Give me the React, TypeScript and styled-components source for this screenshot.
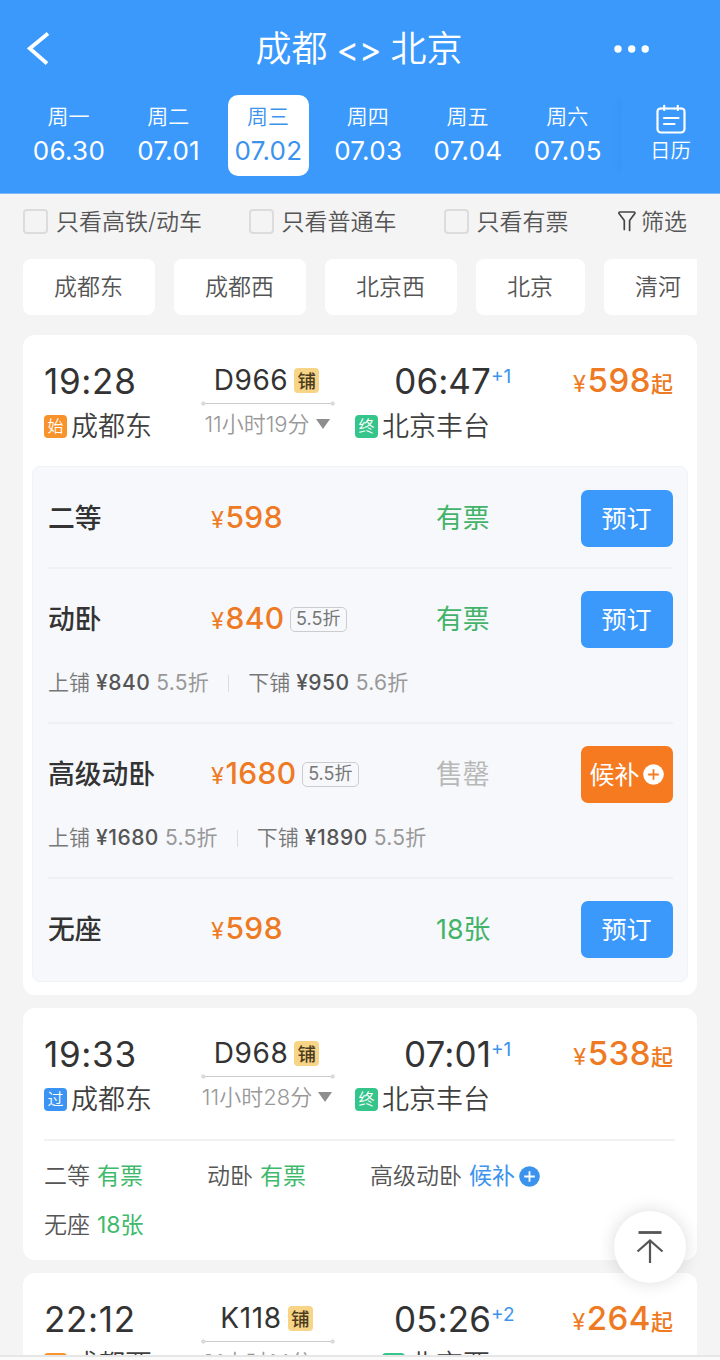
import React from "react";
import styled, { createGlobalStyle } from "styled-components";

const Global = createGlobalStyle`
  *, *::before, *::after { box-sizing: border-box; }
  body {
    margin: 0;
    background: #f4f4f4;
    font-family: Inter, "Noto Sans CJK SC", sans-serif;
    color: #333;
    -webkit-font-smoothing: antialiased;
  }
  button { font: inherit; border: 0; padding: 0; background: none; color: inherit; }
`;

const Screen = styled.div`
  position: relative;
  width: 720px;
  height: 1360px;
  overflow: hidden;
  display: flex;
  flex-direction: column;
  background: #f4f4f4;
  white-space: nowrap;
`;

const Header = styled.header`
  height: 194px;
  flex: none;
  background: #3b99fc;
  border-bottom: 1px solid #7cb9f8;
  color: #fff;
`;

const NavBar = styled.div`
  height: 94px;
  padding: 3px 70px 0 27px;
  display: flex;
  align-items: center;
  justify-content: space-between;
`;

const Title = styled.h1`
  margin: 0;
  padding: 1px 0 0 54px;
  display: flex;
  gap: 9px;
  font-size: 36px;
  line-height: 48px;
  font-weight: 350;
`;

const Arrows = styled.span`
  font-size: 34px;
  font-weight: 400;
  padding-top: 1px;
`;

const DateStrip = styled.div`
  display: flex;
  padding: 1px 0 0 19px;
`;

const Days = styled.div`
  display: flex;
  width: 602px;
`;

const Day = styled.button<{ $active?: boolean }>`
  width: 81px;
  height: 81px;
  margin: 0 9.4px;
  border-radius: 10px;
  background: ${(p) => (p.$active ? "#fff" : "transparent")};
  color: ${(p) => (p.$active ? "#3b93ee" : "#fff")};
  display: flex;
  flex-direction: column;
  align-items: center;
  padding-top: 6px;
`;

const Weekday = styled.span`
  font-size: 21px;
  line-height: 32px;
  font-weight: 350;
  margin-right: 1px;
`;

const DayDate = styled.span`
  font-size: 26px;
  line-height: 36px;
  font-weight: 400;
  letter-spacing: 0.3px;
`;

const CalendarButton = styled.button`
  width: 99px;
  height: 81px;
  padding-top: 9px;
  display: flex;
  flex-direction: column;
  align-items: center;
  font-size: 20.5px;
  line-height: 32px;
  font-weight: 350;
  box-shadow: -6px 0 6px -5px rgba(20, 90, 190, 0.13);
`;

const Filters = styled.div`
  height: 65px;
  flex: none;
  padding: 0 33px 10px 23px;
  display: flex;
  align-items: center;
  color: #555;
`;

const FilterOption = styled.label<{ $width: number }>`
  width: ${(p) => p.$width}px;
  display: flex;
  align-items: center;
  gap: 8px;
  font-size: 23px;
  line-height: 34px;
  font-weight: 350;
`;

const CheckSquare = styled.span`
  width: 25px;
  height: 25px;
  border: 2px solid #dcdcdc;
  border-radius: 4px;
`;

const FilterButton = styled.button`
  margin-left: auto;
  display: flex;
  align-items: center;
  gap: 5px;
  font-size: 23px;
  line-height: 34px;
  font-weight: 350;
`;

const Chips = styled.div`
  flex: none;
  margin: 0 23px;
  overflow: hidden;
  display: flex;
  gap: 19px;
`;

const Chip = styled.button`
  flex: none;
  height: 56px;
  padding: 0 32px 0 31px;
  border-radius: 8px;
  background: #fff;
  color: #555;
  font-size: 23px;
  font-weight: 350;
  line-height: 56px;
`;

const TrainList = styled.main`
  flex: none;
  margin: 20px 23px 0;
  display: flex;
  flex-direction: column;
  gap: 13px;
`;

const Card = styled.article<{ $height: number }>`
  height: ${(p) => p.$height}px;
  border-radius: 12px;
  background: #fff;
`;

const Summary = styled.div`
  height: 131px;
  padding: 24px 24px 0 21px;
  display: grid;
  grid-template-columns: 157px 134px 156px 1fr;
`;

const Time = styled.div`
  position: relative;
  font-size: 35px;
  line-height: 44px;
  height: 45px;
  font-weight: 400;
  letter-spacing: 0.7px;
`;

const PlusDays = styled.sup`
  position: absolute;
  left: 100%;
  top: 8px;
  font-size: 19px;
  line-height: 20px;
  color: #3b93ee;
  font-weight: 400;
  letter-spacing: 0;
`;

const Station = styled.div`
  height: 46px;
  display: flex;
  align-items: center;
  gap: 4px;
  font-size: 27px;
  line-height: 46px;
  font-weight: 350;
  color: #3f3f3f;
`;

const EndPoint = styled.div<{ $end?: boolean }>`
  display: flex;
  flex-direction: column;
  align-items: ${(p) => (p.$end ? "flex-end" : "flex-start")};
  ${Time} { letter-spacing: ${(p) => (p.$end ? "0.1px" : "0.7px")}; }
  ${Station} { margin-right: ${(p) => (p.$end ? "1px" : "0")}; }
`;

const tagColors = { 始: "#f8922b", 过: "#3b93f3", 终: "#35c48a" };
type Tag = keyof typeof tagColors;

const StationTag = styled.span<{ $tag: Tag }>`
  width: 23px;
  height: 23px;
  margin-bottom: 2px;
  border-radius: 4px;
  background: ${(p) => tagColors[p.$tag]};
  color: #fff;
  font-size: 16px;
  line-height: 22px;
  text-align: center;
`;

const Middle = styled.div`
  display: flex;
  flex-direction: column;
  align-items: center;
`;

const TrainNo = styled.div`
  height: 42px;
  display: flex;
  align-items: center;
  gap: 6px;
  font-size: 28px;
  line-height: 43px;
  font-weight: 400;
  letter-spacing: 0.6px;
  padding-right: 3px;
`;

const BunkTag = styled.span`
  width: 25px;
  height: 25px;
  border-radius: 4px;
  background: #f8d487;
  color: #4b3d1e;
  font-size: 18.5px;
  line-height: 27px;
  text-align: center;
  font-weight: 500;
  letter-spacing: 0;
`;

const Duration = styled.div`
  height: 36px;
  display: flex;
  align-items: center;
  gap: 6px;
  font-size: 22px;
  line-height: 36px;
  color: #999;
  font-weight: 350;
  padding-right: 2px;
`;

const Caret = styled.span`
  border: 7px solid transparent;
  border-top: 10px solid #8e8e8e;
  border-bottom: 0;
`;

const FromPrice = styled.div`
  display: flex;
  align-items: baseline;
  justify-content: flex-end;
  height: 44px;
  line-height: 44px;
  font-weight: 500;
  color: #ee7a23;
  font-size: 33px;
  letter-spacing: 0.5px;
  margin: -1px -1px 0 0;
`;

const Yen = styled.span`
  font-size: 23.5px;
  font-weight: 400;
  letter-spacing: 0;
  margin-right: 1.5px;
`;

const FromSuffix = styled.span`
  font-size: 22px;
  letter-spacing: 0;
  margin-right: 1px;
`;

const Panel = styled.div`
  margin: 0 9px;
  height: 516px;
  padding: 0 14.5px 0 15px;
  border-radius: 8px;
  background: #f6f8fb;
  border: 1px solid #f1f3f7;
`;

const Seat = styled.section<{ $height: number }>`
  height: ${(p) => p.$height}px;
  padding-top: 22px;
  border-bottom: 2px solid #f0eff2;
  &:first-child { padding-top: 23px; }
  &:last-child { border-bottom: 0; }
`;

const SeatRow = styled.div`
  height: 57px;
  display: grid;
  grid-template-columns: 163px 225px 1fr 92px;
  align-items: center;
  font-size: 26.8px;
  line-height: 40px;
`;

const SeatName = styled.span`
  font-weight: 500;
  margin-top: -1px;
`;

const SeatPrice = styled.span`
  display: flex;
  align-items: center;
  font-size: 30px;
  font-weight: 500;
  color: #ee7a23;
`;

const Amount = styled.span`
  display: flex;
  align-items: baseline;
  letter-spacing: 0.4px;
`;

const Discount = styled.span`
  height: 25px;
  margin-left: 5px;
  padding: 0 5.5px;
  border: 1px solid #ccc;
  border-radius: 5px;
  color: #777;
  font-size: 18px;
  line-height: 22px;
  font-weight: 400;
`;

const SeatStatus = styled.span<{ $soldOut?: boolean }>`
  color: ${(p) => (p.$soldOut ? "#b8b8b8" : "#43b369")};
  font-weight: 400;
  margin-top: -1px;
`;

const BookButton = styled.button<{ $waitlist?: boolean }>`
  width: 92px;
  height: 57px;
  border-radius: 7px;
  background: ${(p) => (p.$waitlist ? "#f57a20" : "#3b99fc")};
  color: #fff;
  font-size: 25px;
  display: flex;
  align-items: center;
  justify-content: center;
  gap: 3px;
`;

const Berths = styled.div`
  height: 70px;
  display: flex;
  align-items: center;
  font-size: 21px;
  line-height: 30px;
  color: #777;
  font-weight: 350;
`;

const Berth = styled.span`
  display: flex;
  align-items: baseline;
  gap: 6px;
  & + & {
    margin-left: 19px;
    padding-left: 20px;
    background: linear-gradient(#ddd, #ddd) left center / 1px 17px no-repeat;
  }
`;

const BerthPrice = styled.b`
  font-weight: 500;
  color: #555;
  letter-spacing: 0.5px;
`;

const BerthRate = styled.span`
  color: #999;
  font-weight: 400;
  letter-spacing: 0.3px;
`;

const SeatBrief = styled.div`
  margin: 0 22px 0 21px;
  border-top: 2px solid #f2f2f2;
  padding-top: 11px;
  display: grid;
  grid-template-columns: repeat(3, 163px);
  grid-auto-rows: 48.5px;
`;

const BriefItem = styled.div`
  display: flex;
  align-items: center;
  gap: 7px;
  height: 48px;
  font-size: 23px;
  line-height: 34px;
  font-weight: 350;
  color: #555;
`;

const BriefStatus = styled.span<{ $waitlist?: boolean }>`
  display: flex;
  align-items: center;
  gap: 4px;
  font-weight: 400;
  color: ${(p) => (p.$waitlist ? "#3b93ee" : "#3fba6c")};
`;

const ToTop = styled.button`
  position: absolute;
  left: 614px;
  top: 1211px;
  width: 72px;
  height: 72px;
  border-radius: 50%;
  background: #fff;
  box-shadow: 0 0 18px rgba(0, 0, 0, 0.14);
  display: grid;
  place-items: center;
`;

const BottomEdge = styled.footer`
  position: absolute;
  left: 0;
  right: 0;
  bottom: 0;
  height: 5px;
  border-top: 2px solid #e6e6e6;
  background: #fafafa;
`;

const PlusCircle = ({ fill, stroke }: { fill: string; stroke: string }) => (
  <svg width="21" height="21" viewBox="0 0 21 21">
    <circle cx="10.5" cy="10.5" r="10.3" fill={fill} />
    <path d="M10.5 5.2v10.6M5.2 10.5h10.6" stroke={stroke} strokeWidth="1.8" />
  </svg>
);

const RouteLine = () => (
  <svg width="134" height="5" viewBox="0 0 134 5" fill="none" stroke="#ccc">
    <path d="M4 2.5h126" />
    <circle cx="2.3" cy="2.5" r="1.6" fill="#e4e4e4" />
    <circle cx="131.7" cy="2.5" r="1.6" fill="#e4e4e4" />
  </svg>
);

const days = [
  ["周一", "06.30"],
  ["周二", "07.01"],
  ["周三", "07.02"],
  ["周四", "07.03"],
  ["周五", "07.04"],
  ["周六", "07.05"],
];

const stations = ["成都东", "成都西", "北京西", "北京", "清河"];

interface TrainInfo {
  depart: string;
  from: string;
  fromTag: Tag;
  no: string;
  duration: string;
  arrive: string;
  plus: string;
  to: string;
  toTag: Tag;
  price: string;
}

const TrainSummary = ({ t }: { t: TrainInfo }) => (
  <Summary>
    <EndPoint>
      <Time>{t.depart}</Time>
      <Station>
        <StationTag $tag={t.fromTag}>{t.fromTag}</StationTag>
        {t.from}
      </Station>
    </EndPoint>
    <Middle>
      <TrainNo>
        {t.no}
        <BunkTag>铺</BunkTag>
      </TrainNo>
      <RouteLine />
      <Duration>
        {t.duration}
        <Caret />
      </Duration>
    </Middle>
    <EndPoint $end>
      <Time>
        {t.arrive}
        <PlusDays>{t.plus}</PlusDays>
      </Time>
      <Station>
        <StationTag $tag={t.toTag}>{t.toTag}</StationTag>
        {t.to}
      </Station>
    </EndPoint>
    <FromPrice>
      <Yen>¥</Yen>
      {t.price}
      <FromSuffix>起</FromSuffix>
    </FromPrice>
  </Summary>
);

interface SeatInfo {
  name: string;
  price: string;
  discount?: string;
  status: string;
  soldOut?: boolean;
  height: number;
  berths?: [string, string, string][];
}

const seats: SeatInfo[] = [
  { name: "二等", price: "598", status: "有票", height: 102 },
  {
    name: "动卧",
    price: "840",
    discount: "5.5折",
    status: "有票",
    height: 155,
    berths: [
      ["上铺", "¥840", "5.5折"],
      ["下铺", "¥950", "5.6折"],
    ],
  },
  {
    name: "高级动卧",
    price: "1680",
    discount: "5.5折",
    status: "售罄",
    soldOut: true,
    height: 155,
    berths: [
      ["上铺", "¥1680", "5.5折"],
      ["下铺", "¥1890", "5.5折"],
    ],
  },
  { name: "无座", price: "598", status: "18张", height: 102 },
];

const SeatDetail = ({ s }: { s: SeatInfo }) => (
  <Seat $height={s.height}>
    <SeatRow>
      <SeatName>{s.name}</SeatName>
      <SeatPrice>
        <Amount>
          <Yen>¥</Yen>
          {s.price}
        </Amount>
        {s.discount && <Discount>{s.discount}</Discount>}
      </SeatPrice>
      <SeatStatus $soldOut={s.soldOut}>{s.status}</SeatStatus>
      <BookButton $waitlist={s.soldOut}>
        {s.soldOut ? "候补" : "预订"}
        {s.soldOut && <PlusCircle fill="#fff" stroke="#f57a20" />}
      </BookButton>
    </SeatRow>
    {s.berths && (
      <Berths>
        {s.berths.map(([name, price, rate]) => (
          <Berth key={name}>
            {name}
            <BerthPrice>{price}</BerthPrice>
            <BerthRate>{rate}</BerthRate>
          </Berth>
        ))}
      </Berths>
    )}
  </Seat>
);

const trains: TrainInfo[] = [
  { depart: "19:28", from: "成都东", fromTag: "始", no: "D966", duration: "11小时19分", arrive: "06:47", plus: "+1", to: "北京丰台", toTag: "终", price: "598" },
  { depart: "19:33", from: "成都东", fromTag: "过", no: "D968", duration: "11小时28分", arrive: "07:01", plus: "+1", to: "北京丰台", toTag: "终", price: "538" },
  { depart: "22:12", from: "成都西", fromTag: "始", no: "K118", duration: "31小时14分", arrive: "05:26", plus: "+2", to: "北京西", toTag: "终", price: "264" },
];

export default function App() {
  return (
    <Screen>
      <Global />
      <Header>
        <NavBar>
          <svg width="23" height="34" viewBox="0 0 23 34" fill="none" stroke="#fff" strokeWidth="3.8">
            <path d="M21 1.500L2.800 16.500L20 31.500" />
          </svg>
          <Title>
            <span>成都</span>
            <Arrows>&lt;&gt;</Arrows>
            <span>北京</span>
          </Title>
          <svg width="36" height="8" viewBox="0 0 36 8" fill="#fff">
            <circle cx="4" cy="4" r="3.7" />
            <circle cx="17.7" cy="4" r="3.7" />
            <circle cx="31.2" cy="4" r="3.7" />
          </svg>
        </NavBar>
        <DateStrip>
          <Days>
            {days.map(([w, d]) => (
              <Day key={d} $active={d === "07.02"}>
                <Weekday>{w}</Weekday>
                <DayDate>{d}</DayDate>
              </Day>
            ))}
          </Days>
          <CalendarButton>
            <svg width="30" height="31" viewBox="0 0 30 31" fill="none" stroke="#fff" strokeWidth="2.200" strokeLinecap="round">
              <path d="M5 4.5H4.5A3 3 0 0 0 1.5 7.5V25A3.500 3.500 0 0 0 5 28.500H25A3.500 3.500 0 0 0 28.500 25V7.500A3 3 0 0 0 25.500 4.500H25M11.500 4.500H18.500" />
              <path d="M8.200 1.800V6M21.800 1.800V6M5 4.500H11.500M18.500 4.500H25M8 14H22.500M8 20H18.500" />
            </svg>
            日历
          </CalendarButton>
        </DateStrip>
      </Header>
      <Filters>
        <FilterOption $width={225.5}><CheckSquare />只看高铁/动车</FilterOption>
        <FilterOption $width={195}><CheckSquare />只看普通车</FilterOption>
        <FilterOption $width={140}><CheckSquare />只看有票</FilterOption>
        <FilterButton>
          <svg width="18" height="24" viewBox="0 0 18 24" fill="none" stroke="#444" strokeWidth="1.7" strokeLinejoin="round" strokeLinecap="round">
            <path d="M6.300 19.500V10.500L1.200 3.800C0.600 2.800 0.900 2 2 2H15.800C16.900 2 17.200 2.800 16.600 3.800L11.600 10.500V20.500" />
          </svg>
          筛选
        </FilterButton>
      </Filters>
      <Chips>
        {stations.map((s) => (
          <Chip key={s}>{s}</Chip>
        ))}
      </Chips>
      <TrainList>
        <Card $height={660}>
          <TrainSummary t={trains[0]} />
          <Panel>
            {seats.map((s) => (
              <SeatDetail key={s.name} s={s} />
            ))}
          </Panel>
        </Card>
        <Card $height={252}>
          <TrainSummary t={trains[1]} />
          <SeatBrief>
            <BriefItem>二等<BriefStatus>有票</BriefStatus></BriefItem>
            <BriefItem>动卧<BriefStatus>有票</BriefStatus></BriefItem>
            <BriefItem>
              高级动卧
              <BriefStatus $waitlist>
                候补
                <PlusCircle fill="#3b93ee" stroke="#fff" />
              </BriefStatus>
            </BriefItem>
            <BriefItem>无座<BriefStatus>18张</BriefStatus></BriefItem>
          </SeatBrief>
        </Card>
        <Card $height={200}>
          <TrainSummary t={trains[2]} />
        </Card>
      </TrainList>
      <ToTop>
        <svg width="28" height="34" viewBox="0 0 28 34" fill="none" stroke="#555" strokeWidth="2.200">
          <path d="M2.500 2.500H25.500" strokeWidth="2.800" />
          <path d="M14 33V10.500M1.500 21.500L14 10.500L26.500 21.500" />
        </svg>
      </ToTop>
      <BottomEdge />
    </Screen>
  );
}
